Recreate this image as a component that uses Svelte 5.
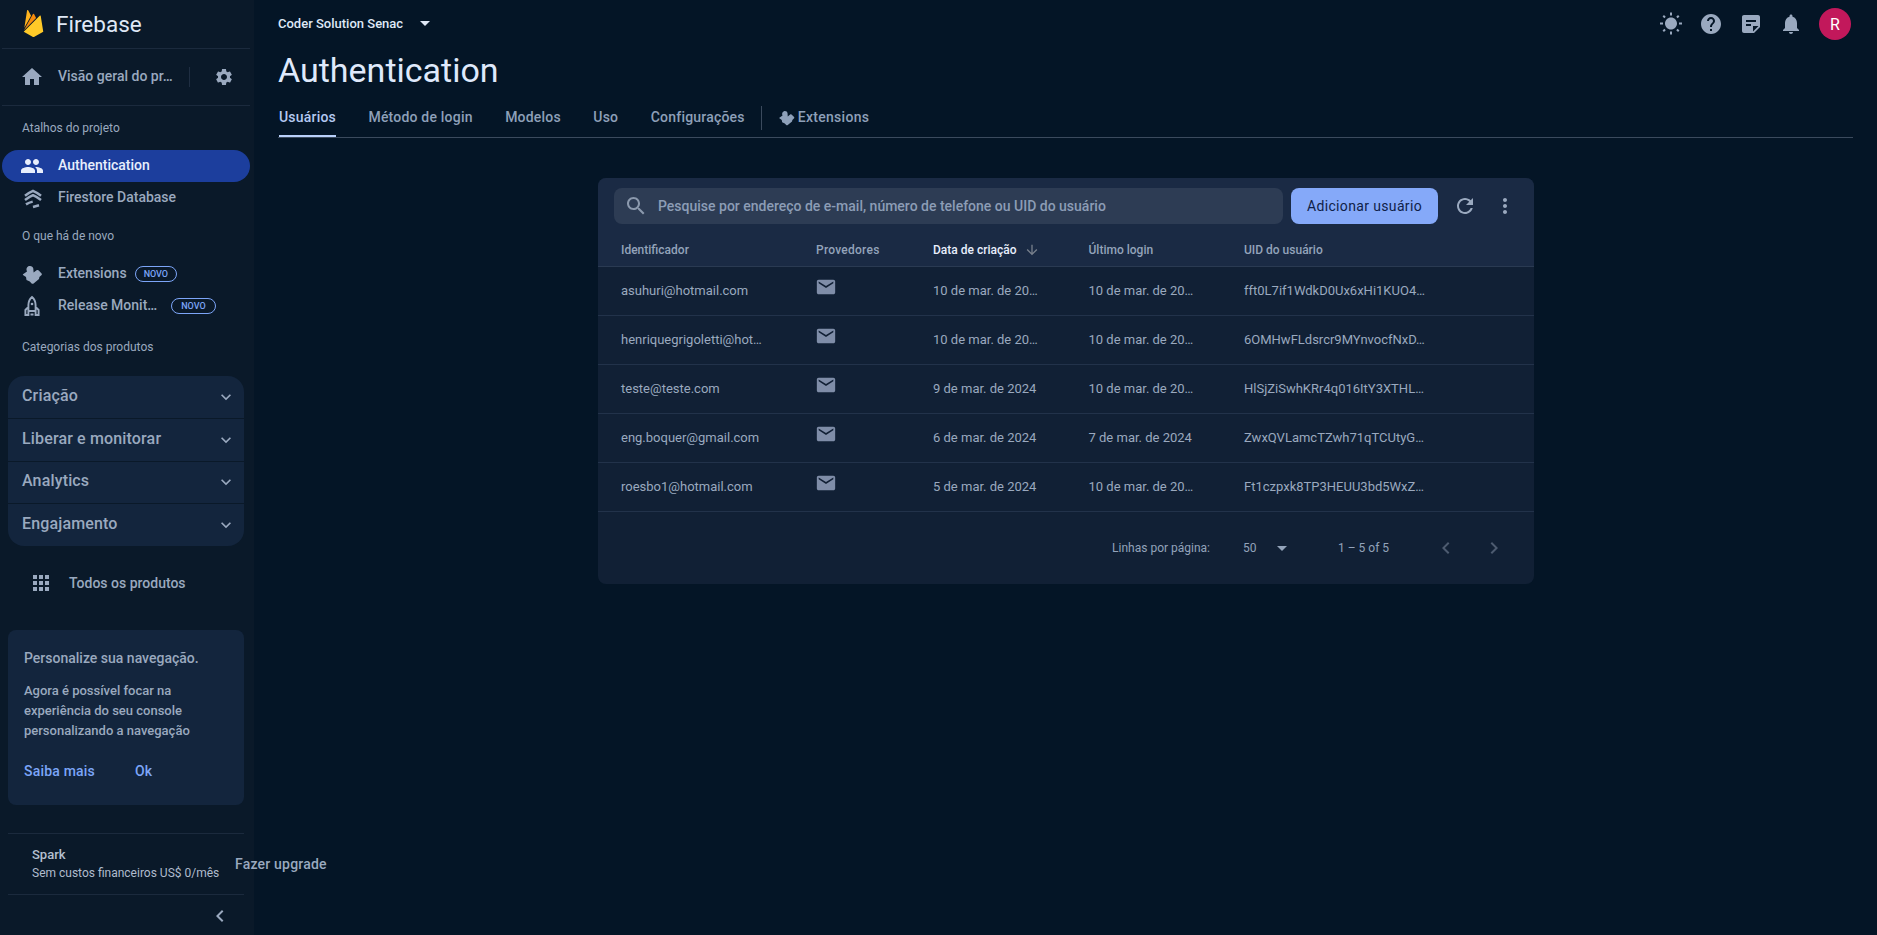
<script>
  const P = {
    home: 'M10 20v-6h4v6h5v-8h3L12 3 2 12h3v8z',
    settings: 'M19.14 12.94c.04-.3.06-.61.06-.94 0-.32-.02-.64-.07-.94l2.03-1.58c.18-.14.23-.41.12-.61l-1.92-3.32c-.12-.22-.37-.29-.59-.22l-2.39.96c-.5-.38-1.03-.7-1.62-.94l-.36-2.54c-.04-.24-.24-.41-.48-.41h-3.84c-.24 0-.43.17-.47.41l-.36 2.54c-.59.24-1.13.57-1.62.94l-2.39-.96c-.22-.08-.47 0-.59.22L2.74 8.87c-.12.21-.08.47.12.61l2.03 1.58c-.05.3-.09.63-.09.94s.02.64.07.94l-2.03 1.58c-.18.14-.23.41-.12.61l1.92 3.32c.12.22.37.29.59.22l2.39-.96c.5.38 1.03.7 1.62.94l.36 2.54c.05.24.24.41.48.41h3.84c.24 0 .44-.17.47-.41l.36-2.54c.59-.24 1.13-.56 1.62-.94l2.39.96c.22.08.47 0 .59-.22l1.92-3.32c.12-.22.07-.47-.12-.61l-2.01-1.58zM12 15.6c-1.98 0-3.6-1.62-3.6-3.6s1.62-3.6 3.6-3.6 3.6 1.62 3.6 3.6-1.62 3.6-3.6 3.6z',
    people: 'M16 11c1.66 0 2.99-1.34 2.99-3S17.66 5 16 5c-1.66 0-3 1.34-3 3s1.34 3 3 3zm-8 0c1.66 0 2.99-1.34 2.99-3S9.66 5 8 5C6.34 5 5 6.34 5 8s1.34 3 3 3zm0 2c-2.33 0-7 1.17-7 3.5V19h14v-2.5c0-2.33-4.67-3.5-7-3.5zm8 0c-.29 0-.62.02-.97.05 1.16.84 1.97 1.97 1.97 3.45V19h6v-2.5c0-2.33-4.67-3.5-7-3.5z',
    extension: 'M3 12.2 7 9.4C5.8 7.4 6.6 5 8.8 4.1 10.8 3.4 13 4.4 13.3 6.6L13.6 10.6 16.6 8.2C17.6 7.7 18.4 8 19 8.8L21.6 11.4C22 11.9 22 12.5 21.6 13L19.4 15 19 17 13.6 21.4C13 22 12.2 22 11.6 21.4L9.8 19.6 6.5 18 6 15 3 12.9C2.8 12.6 2.8 12.4 3 12.2Z',
    help: 'M12 2C6.48 2 2 6.48 2 12s4.48 10 10 10 10-4.48 10-10S17.52 2 12 2zm1 17h-2v-2h2v2zm2.07-7.75l-.9.92C13.45 12.9 13 13.5 13 15h-2v-.5c0-1.1.45-2.1 1.17-2.83l1.24-1.26c.37-.36.59-.86.59-1.41 0-1.1-.9-2-2-2s-2 .9-2 2H8c0-2.21 1.79-4 4-4s4 1.79 4 4c0 .88-.36 1.68-.93 2.25z',
    bell: 'M12 22c1.1 0 2-.9 2-2h-4c0 1.1.89 2 2 2zm6-6v-5c0-3.07-1.64-5.64-4.5-6.32V4c0-.83-.67-1.5-1.5-1.5s-1.5.67-1.5 1.5v.68C7.63 5.36 6 7.92 6 11v5l-2 2v1h16v-1l-2-2z',
    sun: 'M6.76 4.84l-1.8-1.79-1.41 1.41 1.79 1.79 1.42-1.41zM4 10.5H1v2h3v-2zm9-9.95h-2V3.5h2V.55zm7.45 3.91l-1.41-1.41-1.79 1.79 1.41 1.41 1.79-1.79zm-3.21 13.7l1.79 1.8 1.41-1.41-1.8-1.79-1.4 1.4zM20 10.5v2h3v-2h-3zm-8-5c-3.31 0-6 2.69-6 6s2.69 6 6 6 6-2.69 6-6-2.69-6-6-6zm-1 16.95h2V19.5h-2v2.95zm-7.45-3.91l1.41 1.41 1.79-1.8-1.41-1.41-1.79 1.8z',
    note: 'M19 3H4.99C3.89 3 3 3.9 3 5l.01 14c0 1.1.89 2 1.99 2h10l6-6V5c0-1.1-.9-2-2-2zM7 8h10v2H7V8zm5 6H7v-2h5v2zm2 5.5V14h5.5L14 19.5z',
    search: 'M15.5 14h-.79l-.28-.27C15.41 12.59 16 11.11 16 9.5 16 5.91 13.09 3 9.5 3S3 5.91 3 9.5 5.91 16 9.5 16c1.61 0 3.09-.59 4.23-1.57l.27.28v.79l5 4.99L20.49 19l-4.99-5zm-6 0C7.01 14 5 11.99 5 9.5S7.01 5 9.5 5 14 7.01 14 9.5 11.99 14 9.5 14z',
    refresh: 'M17.65 6.35C16.2 4.9 14.21 4 12 4c-4.42 0-7.99 3.58-7.99 8s3.57 8 7.99 8c3.73 0 6.84-2.55 7.73-6h-2.08c-.82 2.33-3.04 4-5.65 4-3.31 0-6-2.69-6-6s2.69-6 6-6c1.66 0 3.14.69 4.22 1.78L13 11h7V4l-2.35 2.35z',
    more: 'M12 8c1.1 0 2-.9 2-2s-.9-2-2-2-2 .9-2 2 .9 2 2 2zm0 2c-1.1 0-2 .9-2 2s.9 2 2 2 2-.9 2-2-.9-2-2-2zm0 6c-1.1 0-2 .9-2 2s.9 2 2 2 2-.9 2-2-.9-2-2-2z',
    mail: 'M20 4H4c-1.1 0-1.99.9-1.99 2L2 18c0 1.1.9 2 2 2h16c1.1 0 2-.9 2-2V6c0-1.1-.9-2-2-2zm0 4l-8 5-8-5V6l8 5 8-5v2z',
    down: 'M20 12l-1.41-1.41L13 16.17V4h-2v12.17l-5.58-5.59L4 12l8 8 8-8z',
    expand: 'M16.59 8.59L12 13.17 7.41 8.59 6 10l6 6 6-6z',
    left: 'M15.41 7.41L14 6l-6 6 6 6 1.41-1.41L10.83 12z',
    right: 'M10 6L8.59 7.41 13.17 12l-4.58 4.59L10 18l6-6z',
    drop: 'M7 10l5 5 5-5z',
    apps: 'M4 8h4V4H4v4zm6 12h4v-4h-4v4zm-6 0h4v-4H4v4zm0-6h4v-4H4v4zm6 0h4v-4h-4v4zm6-10v4h4V4h-4zm-6 4h4V4h-4v4zm6 6h4v-4h-4v4zm0 6h4v-4h-4v4z'
  };
  const cats = ['Criação', 'Liberar e monitorar', 'Analytics', 'Engajamento'];
  const tabs = ['Método de login', 'Modelos', 'Uso', 'Configurações'];
  const users = [
    ['asuhuri@hotmail.com', '10 de mar. de 20…', '10 de mar. de 20…', 'fft0L7if1WdkD0Ux6xHi1KUO4…'],
    ['henriquegrigoletti@hot…', '10 de mar. de 20…', '10 de mar. de 20…', '6OMHwFLdsrcr9MYnvocfNxD…'],
    ['teste@teste.com', '9 de mar. de 2024', '10 de mar. de 20…', 'HlSjZiSwhKRr4q016ItY3XTHL…'],
    ['eng.boquer@gmail.com', '6 de mar. de 2024', '7 de mar. de 2024', 'ZwxQVLamcTZwh71qTCUtyG…'],
    ['roesbo1@hotmail.com', '5 de mar. de 2024', '10 de mar. de 20…', 'Ft1czpxk8TP3HEUU3bd5WxZ…']
  ];
</script>

{#snippet icon(d, cls = '')}
  <svg class="ic {cls}" viewBox="0 0 24 24" aria-hidden="true"><path {d} /></svg>
{/snippet}

<div class="page">
  <aside class="side">
    <div class="brand">
      <svg class="flame" viewBox="0 0 24 24" aria-hidden="true">
        <path fill="#FFB41F" d="M3.89 15.672L6.255.461A.542.542 0 0 1 7.27.288l2.543 4.771z" />
        <path fill="#F58A0C" d="M14.3 7.147l-1.82-3.482a.542.542 0 0 0-.96 0L3.53 17.984z" />
        <path fill="#FFCA28" d="M20.684 19.364l-2.25-14a.54.54 0 0 0-.919-.295L3.316 19.365l7.856 4.427a1.621 1.621 0 0 0 1.588 0z" />
      </svg>
      <span class="brand-name">Firebase</span>
    </div>

    <div class="overview">
      {@render icon(P.home, 'nav-ic')}
      <span class="ov-label">Visão geral do pr…</span>
      <span class="ov-sep"></span>
      {@render icon(P.settings, 'gear')}
    </div>

    <div class="label">Atalhos do projeto</div>
    <div class="item active">{@render icon(P.people, 'nav-ic')}<span>Authentication</span></div>
    <div class="item">
      <svg class="ic nav-ic outline bands" viewBox="0 0 24 24" aria-hidden="true">
        <path d="M5 9.7Q9 6.5 13 4.8Q17 6.5 21 9.7M5 14Q9 11 13 9.2Q17 11 21 14M6 18.4Q9 16.5 12.7 15.6M13 21L19 19.2" />
      </svg>
      <span>Firestore Database</span>
    </div>

    <div class="label">O que há de novo</div>
    <div class="item">
      {@render icon(P.extension, 'nav-ic')}
      <span>Extensions</span><span class="novo">NOVO</span>
    </div>
    <div class="item">
      <svg class="ic nav-ic outline" viewBox="0 0 24 24" aria-hidden="true">
        <path d="M12 3c2.8 2.4 3.6 5.2 3.6 8v6H8.4v-6C8.4 8.2 9.2 5.4 12 3zM8.4 13l-3 3v5h3v-4M15.6 13l3 3v5h-3v-4M10.5 20.5h3" />
        <circle cx="12" cy="10" r="1.3" />
      </svg>
      <span>Release Monit…</span><span class="novo wide">NOVO</span>
    </div>

    <div class="label cat">Categorias dos produtos</div>
    <div class="accordion">
      {#each cats as c}
        <div class="acc-row"><span>{c}</span>{@render icon(P.expand, 'acc-ic')}</div>
      {/each}
    </div>

    <div class="all">{@render icon(P.apps, 'nav-ic')}<span>Todos os produtos</span></div>

    <section class="tip">
      <h3>Personalize sua navegação.</h3>
      <p>Agora é possível focar na experiência do seu console personalizando a navegação</p>
      <div class="tip-links"><span>Saiba mais</span><span>Ok</span></div>
    </section>

    <div class="plan">
      <div class="plan-text">
        <strong>Spark</strong>
        <small>Sem custos financeiros US$ 0/mês</small>
      </div>
      <span class="upgrade">Fazer upgrade</span>
    </div>
    <div class="collapse">{@render icon(P.left, 'nav-ic')}</div>
  </aside>

  <main class="main">
    <header class="top">
      <div class="project">Coder Solution Senac {@render icon(P.drop, 'drop')}</div>
      <div class="actions">
        {@render icon(P.sun)}
        {@render icon(P.help)}
        {@render icon(P.note)}
        {@render icon(P.bell)}
        <span class="avatar">R</span>
      </div>
    </header>
    <h1>Authentication</h1>
    <nav class="tabs">
      <span class="tab on">Usuários</span>
      {#each tabs as t}<span class="tab">{t}</span>{/each}
      <span class="tab-sep"></span>
      <span class="tab ext">{@render icon(P.extension, 'ext-ic')}Extensions</span>
    </nav>

    <section class="card">
      <div class="head">
        <div class="toolbar">
          <div class="search">
            {@render icon(P.search, 'search-ic')}
            <span>Pesquise por endereço de e-mail, número de telefone ou UID do usuário</span>
          </div>
          <button class="add">Adicionar usuário</button>
          {@render icon(P.refresh, 'refresh')}
          {@render icon(P.more, 'more')}
        </div>
        <div class="row th">
          <span>Identificador</span>
          <span class="prov-h">Provedores</span>
          <span class="sorted">Data de criação {@render icon(P.down, 'sort')}</span>
          <span>Último login</span>
          <span>UID do usuário</span>
        </div>
      </div>
      {#each users as u}
        <div class="row td">
          <span>{u[0]}</span>
          <span class="prov">{@render icon(P.mail, 'mail')}</span>
          <span>{u[1]}</span>
          <span>{u[2]}</span>
          <span>{u[3]}</span>
        </div>
      {/each}
      <div class="pager">
        <span>Linhas por página:</span>
        <span class="size">50 {@render icon(P.drop, 'drop2')}</span>
        <span class="range">1 – 5 of 5</span>
        <span class="pg-first">{@render icon(P.left, 'pg')}</span>
        {@render icon(P.right, 'pg')}
      </div>
    </section>
  </main>
</div>

<style>
  :global(body) { margin: 0; background: #041526; overflow: hidden; }
  .page { display: flex; height: 935px; font-family: Roboto, "Liberation Sans", sans-serif; color: #9aa9bf; font-size: 14px; }
  .ic { width: 24px; height: 24px; fill: currentColor; flex: none; display: block; }
  .outline { fill: none; stroke: currentColor; stroke-width: 1.9; }
  .outline circle { fill: currentColor; stroke: none; }
  .bands { stroke-width: 2.5; stroke-linejoin: round; }

  /* Sidebar */
  .side { width: 254px; flex: none; background: #0a1929; height: 935px; display: flex; flex-direction: column; }
  .brand { height: 48px; margin: 0 4px 0 2px; border-bottom: 1px solid #1b2a3d; display: flex; align-items: center; flex: none; }
  .flame { width: 27px; height: 27px; margin-left: 18px; margin-top: -2px; }
  .brand-name { margin-left: 9px; font-size: 22.5px; color: #dfe8f6; margin-top: -1px; }
  .overview { height: 56px; margin: 0 4px 0 2px; border-bottom: 1px solid #1b2a3d; display: flex; align-items: center; flex: none; }
  .overview :global(.nav-ic) { margin-left: 18px; }
  .ov-label { margin-left: 14px; width: 117px; font-weight: 500; white-space: nowrap; padding-bottom: 2px; }
  .ov-sep { width: 1px; height: 20px; background: #1f2e42; margin-left: 14px; }
  .overview :global(.gear) { margin-left: 24px; width: 20px; height: 20px; }

  .label { height: 44px; flex: none; display: flex; align-items: center; padding-left: 22px; font-size: 12px; }
  .label.cat { height: 50px; margin-bottom: 4px; }
  .item { height: 32px; flex: none; margin: 0 4px 0 2px; display: flex; align-items: center; border-radius: 16px; font-weight: 500; white-space: nowrap; }
  .item > span { padding-bottom: 2px; }
  .item :global(.nav-ic) { margin-left: 18px; margin-right: 14px; }
  .item.active { background: #1c3e9d; color: #e8eefc; }
  .item > .novo { border: 1px solid #7ca5f8; color: #7ca5f8; border-radius: 8px; height: 14px; line-height: 14px; padding: 0 8px; font-size: 9px; font-weight: 500; margin-left: 8px; }
  .item > .novo.wide { margin-left: 14px; padding: 0 9px; }

  .accordion { margin: 0 10px 0 8px; height: 170px; flex: none; background: #13253d; border-radius: 16px; display: flex; flex-direction: column; }
  .acc-row { flex: 1; display: flex; align-items: center; justify-content: space-between; padding: 0 8px 0 14px; font-size: 16px; font-weight: 500; letter-spacing: .15px; }
  .acc-row > span { padding-bottom: 3px; }
  .acc-row + .acc-row { border-top: 1px solid #0a1929; }
  .acc-row :global(.acc-ic) { width: 20px; height: 20px; }

  .all { height: 74px; flex: none; display: flex; align-items: center; font-weight: 500; }
  .all :global(.nav-ic) { margin-left: 29px; margin-right: 16px; }

  .tip { margin: 10px 10px 0 8px; height: 175px; flex: none; box-sizing: border-box; background: #13253d; border-radius: 8px; padding: 19px 16px 0; }
  .tip h3 { margin: 0; font-size: 14px; line-height: 18px; font-weight: 500; }
  .tip p { margin: 14px 0 0; font-size: 13px; line-height: 20px; font-weight: 500; width: 190px; }
  .tip-links { margin-top: 20px; display: flex; gap: 40px; color: #7ca5f8; font-weight: 500; line-height: 20px; letter-spacing: .2px; }

  .plan { margin: 28px 10px 0 8px; height: 60px; flex: none; border-top: 1px solid #1b2a3d; border-bottom: 1px solid #1b2a3d; display: flex; align-items: center; white-space: nowrap; }
  .plan-text { margin-left: 24px; display: flex; flex-direction: column; width: 203px; flex: none; }
  .plan-text strong { font-size: 13px; font-weight: 500; line-height: 18px; color: #b5c0d0; }
  .plan-text small { font-size: 12px; line-height: 18px; color: #b0bccd; }
  .upgrade { font-size: 14px; font-weight: 500; letter-spacing: .2px; flex: none; padding-bottom: 1px; }
  .collapse { display: flex; justify-content: flex-end; padding: 9px 22px 0 0; }

  /* Main */
  .main { flex: 1; min-width: 0; padding: 0 24px; }
  .top { height: 48px; display: flex; align-items: center; justify-content: space-between; }
  .project { display: flex; align-items: center; font-size: 13px; font-weight: 500; color: #dfe8f6; margin-top: -2px; }
  .project :global(.drop) { margin-left: 10px; }
  .actions { display: flex; align-items: center; gap: 16px; padding-right: 2px; }
  .avatar { width: 32px; height: 32px; border-radius: 50%; background: #c2185b; color: #fff; display: flex; align-items: center; justify-content: center; font-size: 16px; }
  h1 { margin: 2px 0 0; font-size: 34px; line-height: 40px; font-weight: 400; color: #dfe9fb; height: 40px; }
  .tabs { margin-top: 3px; height: 44px; display: flex; align-items: center; gap: 32.5px; border-bottom: 1px solid #3b4a5d; }
  .tab { font-size: 14px; letter-spacing: .2px; font-weight: 500; color: #8ea0b9; height: 44px; line-height: 48px; white-space: nowrap; }
  .tab.on { color: #b4c9f2; box-sizing: border-box; border-bottom: 2px solid #b9d0fa; margin-left: 1px; }
  .tab-sep { width: 1px; height: 24px; background: #3b4a5d; margin: 6px -16px 0 -16px; }
  .tab.ext { display: flex; align-items: center; box-sizing: border-box; padding-top: 4px; line-height: normal; letter-spacing: .3px; }
  .tab.ext :global(.ext-ic) { width: 19px; height: 19px; margin-right: 2px; margin-left: -2px; }

  .card { width: 936px; margin: 40px 0 0 320px; border-radius: 8px; overflow: hidden; background: #112035; }
  .head { background: #1a2a44; }
  .toolbar { height: 60px; box-sizing: border-box; padding: 10px 0 0 16px; display: flex; align-items: flex-start; }
  .search { width: 669px; height: 36px; border-radius: 8px; background: #2d3c54; display: flex; align-items: center; flex: none; font-weight: 500; color: #8c9db6; white-space: nowrap; }
  .search :global(.search-ic) { margin: 0 10px; color: #8b99ad; }
  .add { width: 147px; height: 36px; margin-left: 8px; border: 0; border-radius: 8px; background: #85a9f9; color: #0f1e47; font: 400 14px Roboto, sans-serif; flex: none; letter-spacing: .35px; padding: 0; }
  .toolbar :global(.refresh) { margin: 6px 0 0 15px; color: #9aa9bf; }
  .toolbar :global(.more) { margin: 6px 0 0 16px; color: #9aa9bf; }
  .row { display: grid; grid-template-columns: 218px 117px 155.5px 155.5px 1fr; }
  .row > :first-child { padding-left: 23px; }
  .th { height: 28px; font-size: 12px; font-weight: 500; color: #93a3ba; align-items: start; border-bottom: 1px solid #2a3a52; line-height: 24px; }
  .prov-h { letter-spacing: .25px; }
  .sorted { color: #e8eefc; display: flex; align-items: center; height: 24px; }
  .sorted :global(.sort) { width: 16px; height: 16px; margin-left: 7px; color: #777f8b; }
  .td { height: 48px; border-bottom: 1px solid #22324a; align-items: center; font-size: 13px; white-space: nowrap; }
  .td > span { padding-bottom: 1px; }
  .prov :global(.mail) { width: 22px; height: 22px; margin: -8px 0 0 -1px; color: #7f8da8; }
  .pager { height: 72px; display: flex; align-items: center; font-size: 12px; color: #93a3ba; padding-right: 28px; justify-content: flex-end; white-space: nowrap; }
  .size { display: flex; align-items: center; margin-left: 33px; width: 64px; }
  .size :global(.drop2) { margin-left: 13px; }
  .range { margin-left: 31px; width: 52px; }
  .pager :global(.pg) { color: #4d5b70; margin-left: 24px; }
  .pg-first { margin-left: 20px; }
</style>
